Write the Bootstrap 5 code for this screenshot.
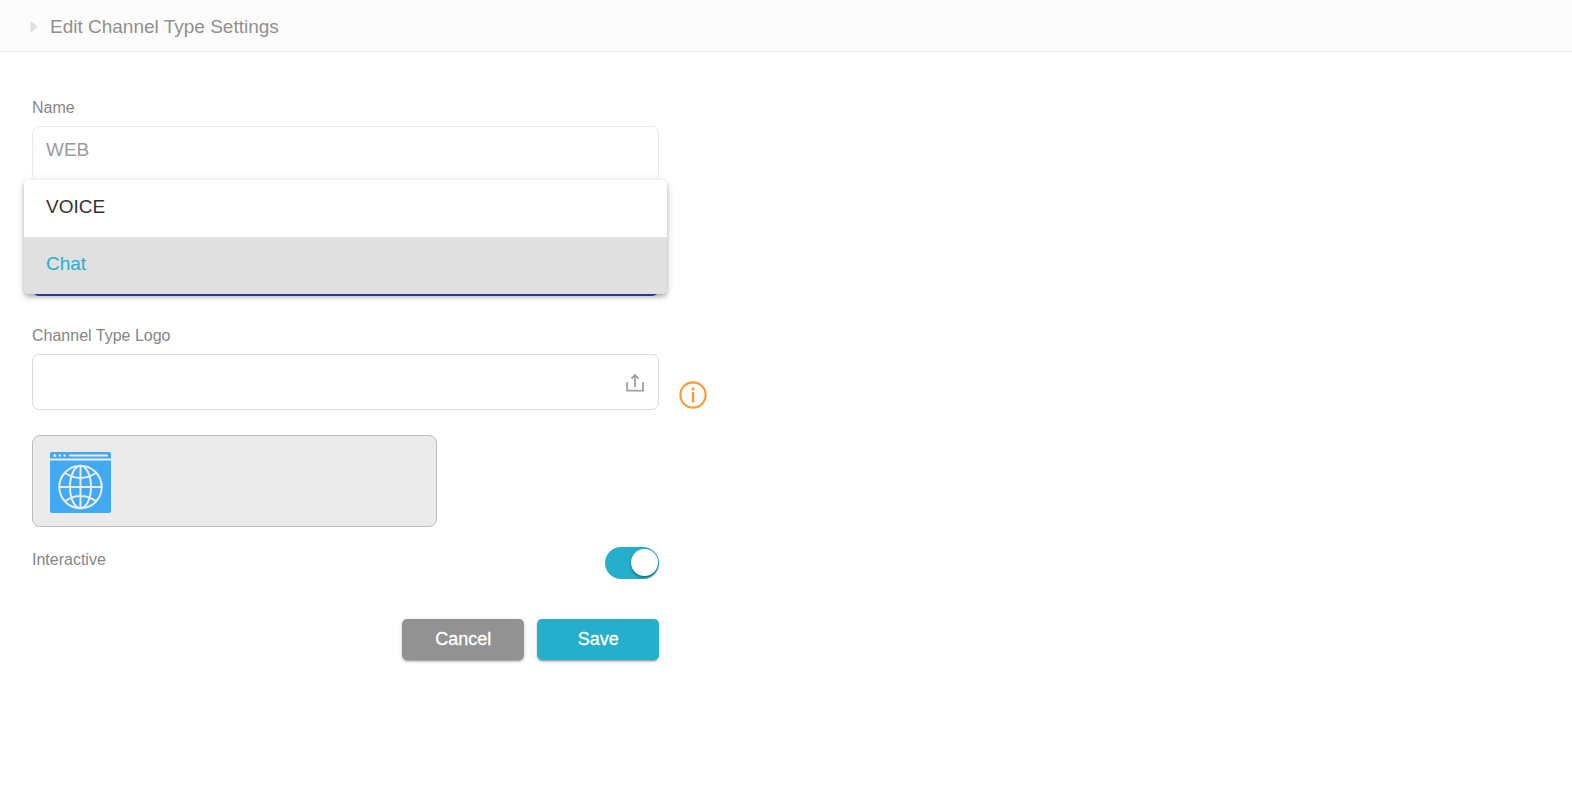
<!DOCTYPE html>
<html lang="en">
<head>
<meta charset="utf-8">
<meta name="viewport" content="width=device-width, initial-scale=1">
<title>Edit Channel Type Settings</title>
<link href="https://cdn.jsdelivr.net/npm/bootstrap@5.3.0/dist/css/bootstrap.min.css" rel="stylesheet">
<style>
  body { font-family: "Liberation Sans", Arial, sans-serif; font-size: 16px; line-height: 24px; color: #868686; background: #fff; }
  .page-head { background: #fcfcfc; border-bottom: 1px solid #ececec; padding: 15px 30px 12px; }
  .page-head h1 { font-size: 19px; line-height: 24px; font-weight: 400; color: #909090; }
  .page-body { padding: 44px 18px 44px 20px; }
  .form-col { padding-left: 12px; padding-right: 0; }
  .form-label { margin-bottom: 6px; line-height: 24px; display: block; }
  .field { height: 56px; border: 1px solid #dcdcdc; border-radius: 7px; font-size: 19px; padding: 0 13px; background: #fff; }
  .field:disabled { background: #fff; color: #9c9c9c; border-color: #ececec; padding-bottom: 8px; }
  .type-select { border: 2px solid #3f51b5; margin-top: 58px; color: transparent; }
  .type-menu { top: -2px; left: -8px; right: -8px; min-width: 0; margin: 0; padding: 0; border: 0; border-radius: 5px; overflow: hidden; z-index: 5;
    box-shadow: 0 2px 4px -1px rgba(0,0,0,.2), 0 4px 5px rgba(0,0,0,.14), 0 1px 10px rgba(0,0,0,.12); }
  .type-menu .dropdown-item { height: 57px; padding: 0 22px 3px; font-size: 19px; color: #333; }
  .type-menu .dropdown-item.active { background: #e0e0e0; color: #26afcd; }
  .upload-btn { right: 14px; top: 0; bottom: 0; color: #a0a0a0; }
  .info-btn { left: 100%; top: 27px; margin-left: 20px; }
  .logo-box { width: 405px; max-width: 100%; padding: 16px 17px 13px; background: #ebebeb; border: 1px solid #bdbdbd; border-radius: 8px; margin-top: 25px; }
  .switch-label { line-height: 26px; }
  .switch-input.form-check-input { width: 54px; height: 32px; margin: 0; border: 0; border-radius: 16px; background: #26afcd; appearance: none; }
  .switch-wrap::after { content: ""; position: absolute; right: 1px; top: 2px; width: 27px; height: 27px; border-radius: 50%; background: #fff; box-shadow: 0 2px 3px rgba(0,0,0,.35); pointer-events: none; }
  .action-row { gap: 13px; }
  .action { width: 122px; height: 41px; border: 0; border-radius: 5px; padding: 0; font-size: 18px; font-weight: 400; -webkit-text-stroke: .3px #fff; color: #fff; background: #929292;
    box-shadow: 0 3px 1px -2px rgba(0,0,0,.2), 0 2px 2px rgba(0,0,0,.14), 0 1px 5px rgba(0,0,0,.12); }
  .action-save { background: #26afcd; }
</style>
</head>
<body>
<header class="page-head d-flex align-items-center">
  <svg width="8" height="12" viewBox="0 0 8 12" aria-hidden="true"><path d="M.5 1.500Q.5 0 1.700 .8L7 5.300Q7.600 6 7 6.700L1.700 11.200Q.5 12 .5 10.500Z" fill="#e0e0e0"/></svg>
  <h1 class="mb-0 ms-2 ps-1">Edit Channel Type Settings</h1>
</header>

<main class="container-fluid page-body">
  <form class="row mx-0">
    <div class="col-5 form-col">
      <label class="form-label" for="name">Name</label>
      <input class="form-control field" id="name" type="text" value="WEB" disabled>

      <div class="position-relative">
        <div class="overflow-hidden"><select class="form-select field type-select" id="mediaType" aria-label="Channel media type">
          <option>VOICE</option>
          <option selected>Chat</option>
        </select></div>
        <div class="dropdown-menu type-menu d-block" role="listbox">
          <button class="dropdown-item" type="button" role="option">VOICE</button>
          <button class="dropdown-item active" type="button" role="option" aria-selected="true">Chat</button>
        </div>
      </div>

      <label class="form-label mt-4 pt-1" for="logo">Channel Type Logo</label>
      <div class="position-relative">
        <input class="form-control field" id="logo" type="text" readonly>
        <button class="btn border-0 p-0 position-absolute upload-btn" type="button" aria-label="Upload logo">
          <svg width="20" height="20" viewBox="0 0 20 20" fill="none" stroke="currentColor" stroke-width="1.800" aria-hidden="true"><path d="M2.200 9v8.600h15.800V9M10 14V2.300M6.500 5.500 10 2l3.500 3.500"/></svg>
        </button>
        <button class="btn border-0 p-0 position-absolute d-flex info-btn" type="button" aria-label="Logo information">
          <svg width="28" height="28" viewBox="0 0 28 28" aria-hidden="true"><circle cx="14" cy="14" r="12.600" fill="none" stroke="#ff9833" stroke-width="2.100"/><circle cx="14" cy="8" r="1.600" fill="#ff9833"/><path d="M14 11v10.500" stroke="#ff9833" stroke-width="2.500"/></svg>
        </button>
      </div>

      <div class="logo-box">
        <svg class="d-block" width="61" height="61" viewBox="0 0 61 61" role="img" aria-label="Web channel logo" fill="none" stroke="#ebebeb" stroke-width="2">
          <rect width="61" height="61" rx="2" fill="#42aaf5" stroke="none"/>
          <path d="M0 7.500h61"/>
          <path d="M20 3.500h37" stroke-linecap="round"/>
          <g fill="#ebebeb" stroke="none"><circle cx="4.800" cy="3.500" r="1.500"/><circle cx="9.800" cy="3.500" r="1.200"/><circle cx="14.500" cy="3.500" r="1.200"/></g>
          <circle cx="30.500" cy="35" r="21.200"/>
          <ellipse cx="30.500" cy="35" rx="10.500" ry="21.200"/>
          <path d="M30.500 13.800v42.400M9.300 35h42.400M15 21Q30.500 31 46 21M15 49Q30.500 39 46 49"/>
        </svg>
      </div>

      <div class="d-flex justify-content-between align-items-start mt-3 pt-1">
        <label class="switch-label" for="interactive">Interactive</label>
        <div class="position-relative switch-wrap d-flex">
          <input class="form-check-input switch-input" type="checkbox" role="switch" id="interactive" checked>
        </div>
      </div>

      <div class="d-flex justify-content-end mt-4 pt-3 action-row">
        <button class="btn action" type="button">Cancel</button>
        <button class="btn action action-save" type="button">Save</button>
      </div>
    </div>
  </form>
</main>
<script src="https://cdn.jsdelivr.net/npm/bootstrap@5.3.0/dist/js/bootstrap.bundle.min.js"></script>
</body>
</html>
